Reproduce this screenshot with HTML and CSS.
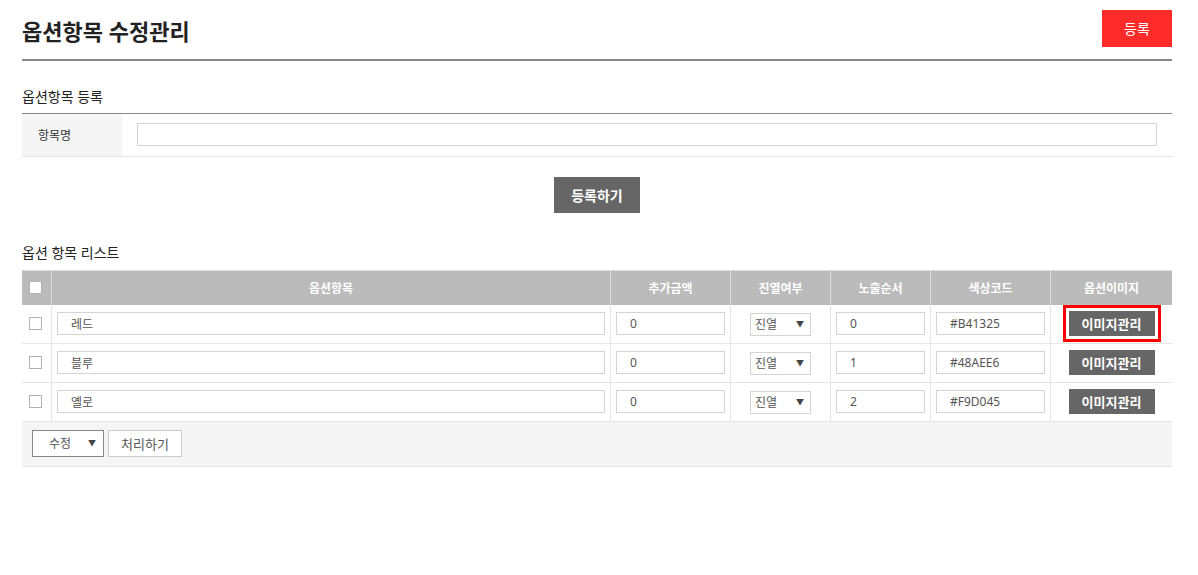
FILE: index.html
```html
<!DOCTYPE html>
<html lang="ko">
<head>
    <meta charset="UTF-8">
    <meta name="viewport" content="width=device-width, initial-scale=1.0">
    <title>옵션항목 수정관리</title>
    <link rel="stylesheet" href="styles.css">
</head>
<body>
    <div class="page">
        <div class="top">
            <h1 class="top-title">옵션항목 수정관리</h1>
            <button class="btn-red">등록</button>
        </div>

        <h2 class="sec-title first">옵션항목 등록</h2>
        <table class="form-table">
            <tr>
                <th>항목명</th>
                <td><input type="text" class="txt full"></td>
            </tr>
        </table>

        <div class="center">
            <button class="btn-dark big">등록하기</button>
        </div>

        <h2 class="sec-title">옵션 항목 리스트</h2>
        <table class="list-table">
            <colgroup>
                <col class="c-chk">
                <col class="c-name">
                <col class="c-price">
                <col class="c-show">
                <col class="c-order">
                <col class="c-color">
                <col class="c-img">
            </colgroup>
            <thead>
                <tr>
                    <th><input type="checkbox" class="chk"></th>
                    <th>옵션항목</th>
                    <th>추가금액</th>
                    <th>진열여부</th>
                    <th>노출순서</th>
                    <th>색상코드</th>
                    <th>옵션이미지</th>
                </tr>
            </thead>
            <tbody>
                <tr>
                    <td><input type="checkbox" class="chk"></td>
                    <td><input type="text" class="txt full" value="레드"></td>
                    <td><input type="text" class="txt full" value="0"></td>
                    <td><span class="sel small"><select><option>진열</option></select></span></td>
                    <td><input type="text" class="txt full" value="0"></td>
                    <td><input type="text" class="txt full" value="#B41325"></td>
                    <td><button class="btn-dark img on">이미지관리</button></td>
                </tr>
                <tr>
                    <td><input type="checkbox" class="chk"></td>
                    <td><input type="text" class="txt full" value="블루"></td>
                    <td><input type="text" class="txt full" value="0"></td>
                    <td><span class="sel small"><select><option>진열</option></select></span></td>
                    <td><input type="text" class="txt full" value="1"></td>
                    <td><input type="text" class="txt full" value="#48AEE6"></td>
                    <td><button class="btn-dark img">이미지관리</button></td>
                </tr>
                <tr>
                    <td><input type="checkbox" class="chk"></td>
                    <td><input type="text" class="txt full" value="옐로"></td>
                    <td><input type="text" class="txt full" value="0"></td>
                    <td><span class="sel small"><select><option>진열</option></select></span></td>
                    <td><input type="text" class="txt full" value="2"></td>
                    <td><input type="text" class="txt full" value="#F9D045"></td>
                    <td><button class="btn-dark img">이미지관리</button></td>
                </tr>
            </tbody>
        </table>

        <div class="list-foot">
            <span class="sel wide"><select><option>수정</option></select></span>
            <button class="btn-line">처리하기</button>
        </div>
    </div>
</body>
</html>
```

FILE: styles.css
```css
body {
    margin: 0;
    font-family: "Noto Sans", "Noto Sans CJK KR", sans-serif;
    color: #222;
    background-color: #fff;
}
.page {
    padding: 0 26px 0 22px;
}
.top {
    display: flex;
    justify-content: space-between;
    align-items: center;
    height: 59px;
    border-bottom: 2px solid #888;
}
.top-title {
    margin: 3px 0 0;
    font-size: 22px;
    line-height: 26px;
    font-weight: bold;
    color: #222;
}
.btn-red {
    width: 70px;
    height: 37px;
    margin-top: -3px;
    border: none;
    background-color: #fe2b2b;
    color: #fff;
    font-family: inherit;
    font-size: 14px;
    cursor: pointer;
}
.sec-title {
    margin: 30px 0 0;
    padding-bottom: 7px;
    font-size: 14px;
    line-height: 20px;
    font-weight: normal;
    color: #222;
}
.sec-title.first {
    margin-top: 26px;
    padding-bottom: 6px;
    border-bottom: 1px solid #888;
}
.form-table {
    width: 100%;
    border-collapse: collapse;
}
.form-table th {
    width: 100px;
    height: 42px;
    padding: 0 0 0 16px;
    box-sizing: border-box;
    background-color: #f5f5f5;
    border-bottom: 1px solid #e5e5e5;
    text-align: left;
    font-size: 12px;
    font-weight: normal;
    color: #333;
}
.form-table td {
    padding: 0 15px;
    border-bottom: 1px solid #e5e5e5;
}
.txt {
    height: 23px;
    padding: 0 13px;
    box-sizing: border-box;
    border: 1px solid #d4d4d4;
    font-family: inherit;
    font-size: 12px;
    color: #555;
    outline: none;
}
.full {
    display: block;
    width: 100%;
}
.center {
    display: flex;
    justify-content: center;
    margin-top: 20px;
}
.btn-dark {
    border: none;
    background-color: #666;
    color: #fff;
    font-family: inherit;
    font-weight: bold;
    cursor: pointer;
}
.btn-dark.big {
    width: 86px;
    height: 36px;
    font-size: 14px;
}
.btn-dark.img {
    width: 86px;
    height: 25px;
    font-size: 13px;
    vertical-align: middle;
}
.btn-dark.on {
    outline: 3px solid #f00;
    outline-offset: 3px;
}
.list-table {
    width: 100%;
    table-layout: fixed;
    border-collapse: separate;
    border-spacing: 0;
}
.c-chk { width: 29px; }
.c-name { width: 559px; }
.c-price { width: 120px; }
.c-show { width: 100px; }
.c-order { width: 100px; }
.c-color { width: 120px; }
.c-img { width: 122px; }
.list-table th {
    height: 35px;
    padding: 0;
    box-sizing: border-box;
    background-color: #bbb;
    border-top: 1px solid #ddd;
    color: #fff;
    font-size: 12px;
    font-weight: bold;
}
.list-table th + th {
    border-left: 1px solid #ddd;
}
.list-table td {
    height: 39px;
    padding: 0 5px;
    box-sizing: border-box;
    border-bottom: 1px solid #e5e5e5;
    text-align: center;
    vertical-align: middle;
}
.list-table td + td {
    border-left: 1px solid #e5e5e5;
}
.list-table td:first-child {
    padding: 0;
}
.chk {
    appearance: none;
    display: block;
    width: 13px;
    height: 13px;
    margin: 0 auto 0 7px;
    border: 1px solid #b3b3b3;
    background-color: #fff;
}
.sel {
    position: relative;
    display: inline-block;
    vertical-align: middle;
}
.sel select {
    appearance: none;
    display: block;
    box-sizing: border-box;
    border: 1px solid #d4d4d4;
    border-radius: 0;
    background-color: #fff;
    font-family: inherit;
    font-size: 12px;
    color: #555;
    outline: none;
}
.sel::after {
    content: "▼";
    position: absolute;
    top: 50%;
    transform: translateY(-50%);
    font-size: 8px;
    line-height: 8px;
    color: #444;
    pointer-events: none;
}
.sel.small select {
    width: 61px;
    height: 23px;
    padding: 0 0 0 4px;
}
.sel.small::after {
    right: 7px;
}
.sel.wide select {
    width: 72px;
    height: 27px;
    padding: 0 0 0 16px;
    border-color: #888;
}
.sel.wide::after {
    right: 8px;
}
.list-foot {
    display: flex;
    gap: 4px;
    padding: 8px 10px 9px;
    background-color: #f5f5f5;
    border-bottom: 1px solid #e5e5e5;
}
.btn-line {
    width: 74px;
    height: 27px;
    border: 1px solid #ccc;
    background-color: #fff;
    font-family: inherit;
    font-size: 13px;
    color: #555;
    cursor: pointer;
}
```
